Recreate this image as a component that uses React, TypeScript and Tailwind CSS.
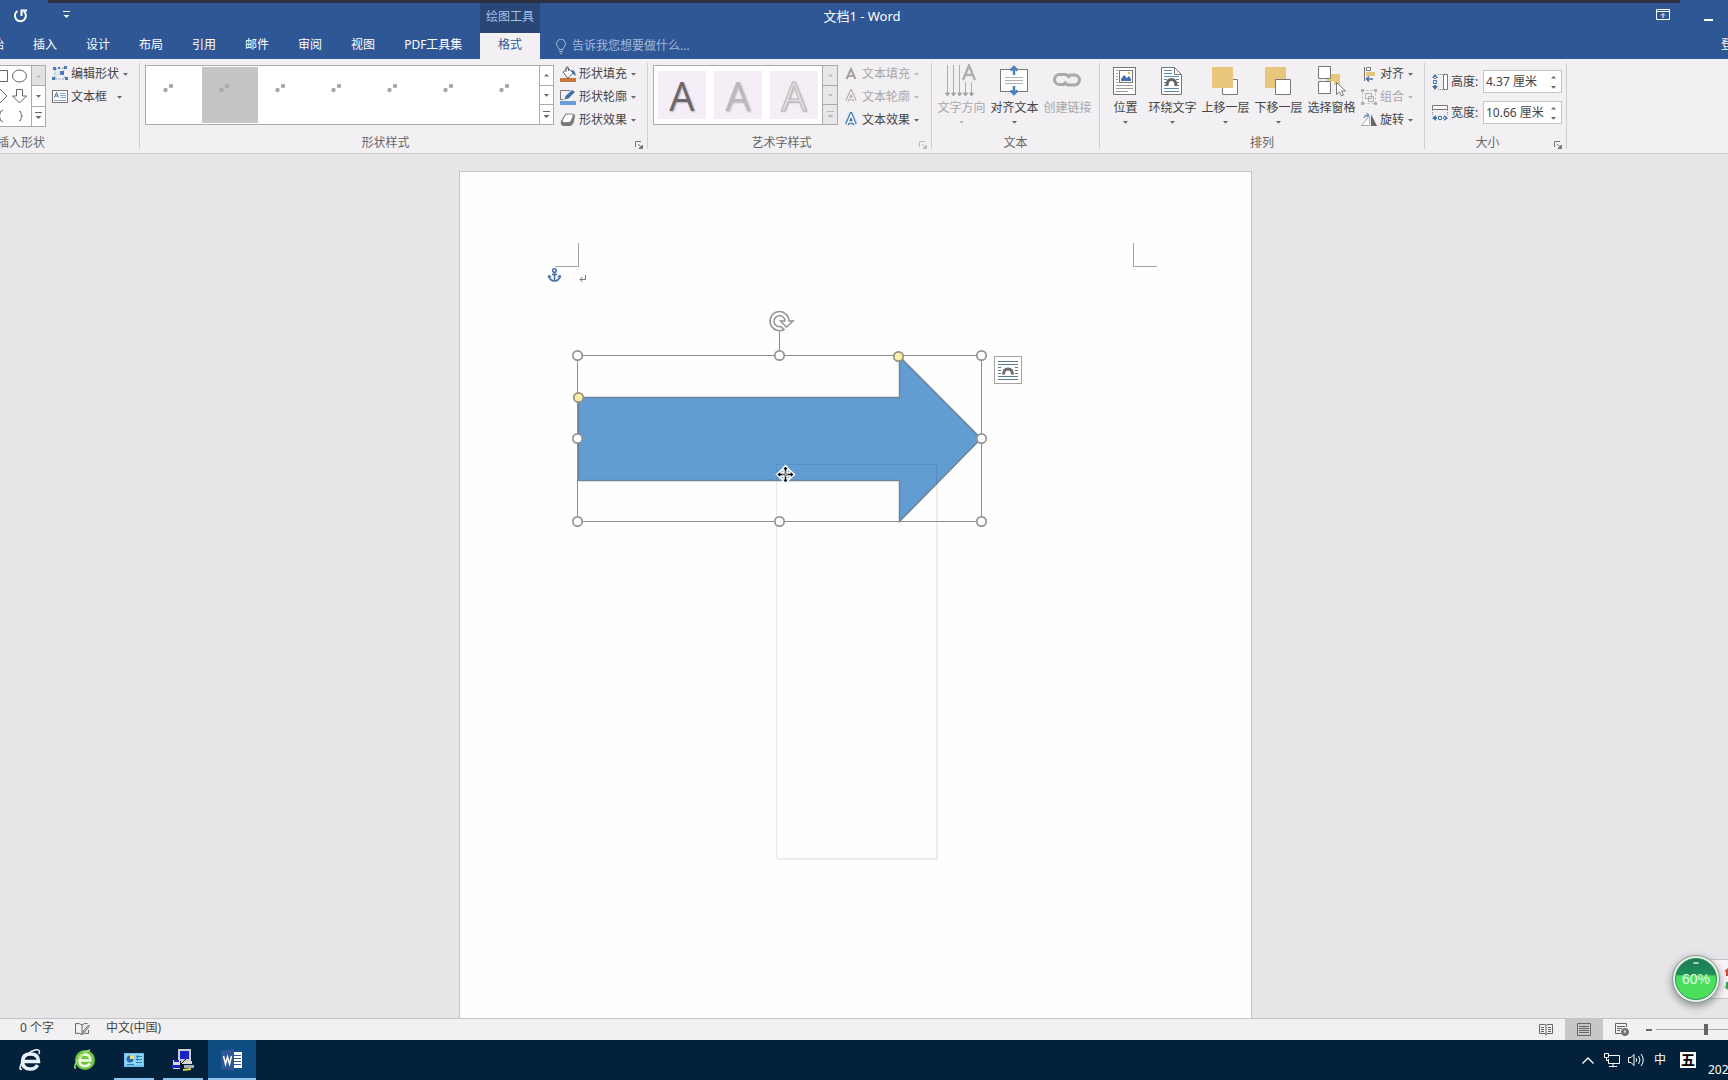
import React from 'react';
import clsx from 'clsx';

const tabs = ['开始', '插入', '设计', '布局', '引用', '邮件', '审阅', '视图', 'PDF工具集'];

/* ---------- small shared pieces ---------- */

const Caret: React.FC<{ up?: boolean; line?: boolean; className?: string }> = ({ up, line, className }) => (
  <svg width="7" height="8" viewBox="0 0 7 8" className={clsx('flex-none', className)} fill="currentColor">
    {line && <path d="M0 0h7v1H0z" />}
    <path d={up ? 'M1 5.5h5L3.5 3z' : line ? 'M0.5 4h6L3.5 7z' : 'M1 3h5L3.5 5.8z'} />
  </svg>
);

const ScrollColumn: React.FC<{ disabled?: boolean; atTop?: boolean; className?: string }> = ({ disabled, atTop, className }) => (
  <div className={clsx('flex flex-none flex-col border-l border-[#ababab]', disabled ? 'bg-[#e9e7ea] text-[#b8b6b9]' : 'bg-white text-[#666]', className)}>
    <button aria-label="向上" className={clsx('flex flex-1 items-center justify-center', atTop && 'bg-[#e3e1e4] text-[#b8b6b9]')}>
      <Caret up />
    </button>
    <button aria-label="向下" className="flex flex-1 items-center justify-center border-y border-[#ababab]">
      <Caret />
    </button>
    <button aria-label="其他" className="flex flex-1 items-center justify-center">
      <Caret line />
    </button>
  </div>
);

const Group: React.FC<{
  label: string;
  launcher?: 'on' | 'off';
  className?: string;
  bodyClass?: string;
  children: React.ReactNode;
}> = ({ label, launcher, className, bodyClass, children }) => (
  <section className={clsx('relative flex flex-none flex-col', className)}>
    <div className={clsx('flex h-[74px]', bodyClass)}>{children}</div>
    <div className={clsx('h-5 text-center leading-5 text-[#666]', launcher && 'pr-4')}>{label}</div>
    {launcher && (
      <button aria-label={label + '选项'} className={clsx('absolute right-1 bottom-1', launcher === 'on' ? 'text-[#777]' : 'text-[#bbb]')}>
        <svg width="8" height="8" viewBox="0 0 8 8" fill="none" stroke="currentColor">
          <path d="M0.5 6V0.5H6M3 3l3 3" />
          <path d="M7.5 4v3.5H4z" fill="currentColor" />
        </svg>
      </button>
    )}
  </section>
);

const Separator = () => <div className="my-1 w-px flex-none bg-[#d0ced1]" />;

const SmallButton: React.FC<{ icon: React.ReactNode; label: string; disabled?: boolean; wide?: boolean }> = ({ icon, label, disabled, wide }) => (
  <button disabled={disabled} className={clsx('flex h-[23px] items-center gap-[3px] whitespace-nowrap', disabled ? 'text-[#a8a6a9]' : 'text-[#444]')}>
    <svg width="16" height="16" viewBox="0 0 16 16" fill="none" className="flex-none">
      {icon}
    </svg>
    <span className={clsx(wide && 'w-[42px] text-left')}>{label}</span>
    <Caret className={disabled ? 'text-[#bbb]' : 'text-[#666]'} />
  </button>
);

const LargeButton: React.FC<{ icon: React.ReactNode; label: string; disabled?: boolean; noCaret?: boolean; className?: string }> = ({
  icon,
  label,
  disabled,
  noCaret,
  className,
}) => (
  <button disabled={disabled} className={clsx('flex flex-none flex-col items-center whitespace-nowrap pt-[5px]', disabled ? 'text-[#a8a6a9]' : 'text-[#444]', className ?? 'w-[53px]')}>
    <svg width="33" height="34" viewBox="0 0 33 34" fill="none">
      {icon}
    </svg>
    <span className="leading-5">{label}</span>
    {!noCaret && <Caret className={disabled ? 'text-[#bbb]' : 'text-[#666]'} />}
  </button>
);

/* ---------- ribbon icons ---------- */

const editShapeIcon = (
  <>
    <path d="M3 3l9-1M3 13h10M3 3v10M13 12l-3-5 4-5" stroke="#7d9cbd" strokeDasharray="2 1.5" />
    <path d="M4 12l5-5-4-3z" fill="#d6e6f4" />
    <path d="M1 1h3v3H1zM12 0h3v3h-3zM8 5h4v4H8zM0 11h3v3H0zM13 11h3v3h-3zM6 1h2v2H6z" fill="#4c7cb0" />
  </>
);

const textBoxIcon = (
  <>
    <rect x="0.5" y="1.5" width="15" height="12" fill="#fff" stroke="#777" />
    <path d="M2.5 8.5l2-5 2 5M3.2 7h2.6" stroke="#3f74ad" />
    <path d="M8 4.500h6M8 6.500h6M8 8.500h6M2 11.500h12" stroke="#8fa7bd" />
  </>
);

const fillIcon = (
  <>
    <path d="M3 6l5-4 5 5-4 4.500H7z" fill="#fff" stroke="#666" />
    <path d="M6 6V1.500Q7.500-.5 8.500 2v3" stroke="#666" />
    <path d="M11 4q5 0 4.500 6Q13 9 11 4z" fill="#4472a8" />
    <path d="M0 12h16v4H0z" fill="#c8763f" />
  </>
);

const outlineIcon = (
  <>
    <path d="M10 1.500H0.500v9h3" stroke="#777" />
    <path d="M4.500 10.500l1-3.500L12 1l3 2-6.500 6.500z" fill="#4472a8" />
    <path d="M0 12h16v4H0z" fill="#6a9bd8" />
  </>
);

const effectIcon = (
  <>
    <path d="M1 9l4-6.500Q6 1.500 8 2h5q2.500 0 2 2l-1 5q-1 5-5 5H3q-3-1-2-5z" fill="#777" />
    <path d="M5 3.500q1-1.500 3-1.500h4q2 0 1 2.500L11 9q-1 1.500-3 1.500H4Q1.500 10 2.500 8z" fill="#fff" stroke="#888" />
  </>
);

const textFillIcon = <path d="M3.500 13L8 3l4.500 10M5 10h6" stroke="#a3a1a4" strokeWidth="2" />;

const textOutlineIcon = (
  <>
    <path d="M4 12L8 3l4 9M5.500 9.500h5" stroke="#aaa8ab" strokeWidth="3.500" />
    <path d="M4 12L8 3l4 9M5.500 9.500h5" stroke="#f2f0f3" strokeWidth="1.500" />
  </>
);

const textEffectIcon = (
  <>
    <path d="M4 12.500L8 3l4 9.500M5.500 10h5" stroke="#b9d3ee" strokeWidth="5.500" />
    <path d="M4 12.500L8 3l4 9.500M5.500 10h5" stroke="#3b6da6" strokeWidth="3.500" />
    <path d="M4 12.500L8 3l4 9.500M5.500 10h5" stroke="#fff" strokeWidth="1.500" />
  </>
);

const textDirectionIcon = (
  <>
    <path d="M2.500 1v29M8.500 1v29M14.500 1v29M20.500 18v12M26.500 18v12" stroke="#b0aeb1" />
    <path d="M0.500 29h4l-2 3zM6.500 29h4l-2 3zM12.500 29h4l-2 3zM18.500 29h4l-2 3zM24.500 29h4l-2 3z" fill="#a3a1a4" stroke="#a3a1a4" />
    <path d="M18 16l6-14.500L30 16M20 11h8" stroke="#b0aeb1" strokeWidth="2.500" />
  </>
);

const alignTextIcon = (
  <>
    <rect x="2.500" y="5.500" width="27" height="22" fill="#fff" stroke="#777" />
    <path d="M7 13.500h18M7 16.500h18M7 19.500h18" stroke="#b0b0b0" />
    <path d="M16 11V4M12.500 6.500L16 3l3.500 3.500M16 22v7M12.500 26.500L16 30l3.500-3.500" stroke="#4a80ba" strokeWidth="2.500" />
  </>
);

const linkIcon = (
  <g stroke="#aaa8ab" strokeWidth="3">
    <path d="M14 20.500H8.500a5 5 0 0 1 0-10H14q3 0 4.500 3.500" />
    <path d="M18 11h5.500a5 5 0 0 1 0 10H18q-3 0-4.500-3.500" />
  </g>
);

const positionIcon = (
  <g transform="translate(-2 0)">
    <rect x="6.500" y="3.500" width="22" height="27" fill="#fff" stroke="#777" />
    <path d="M9 6.500h2M9 9.500h2M9 12.500h2M9 15.500h2M9 18.500h2M9 21.500h17M9 24.500h17M9 27.500h12" stroke="#9a9a9a" />
    <rect x="12.500" y="6.500" width="13" height="12" fill="#fff" stroke="#777" />
    <path d="M14 17v-2l3-4 3 3 2-2 2 3v2z" fill="#4472a8" />
    <path d="M21 8h2v2h-2z" fill="#e8b44e" />
  </g>
);

const wrapIcon = (
  <g transform="translate(-2 0)">
    <path d="M7.500 3.500h13l7 7v20h-20z" fill="#fff" stroke="#777" />
    <path d="M20.500 3.500v7h7" stroke="#777" />
    <path d="M10 6.500h8M10 9.500h8M10 12.500h15M10 15.500h3M10 18.500h2M10 21.500h2M22 15.500h3M23 18.500h2M23 21.500h2M10 24.500h15M10 27.500h15" stroke="#5f88ad" />
    <path d="M13 22q0-6.500 4.500-6.500T22 22" stroke="#666" strokeWidth="3" />
  </g>
);

const forwardIcon = (
  <>
    <path d="M13.500 15.500h15v15h-15z" fill="#fff" stroke="#777" />
    <path d="M3 3h21v21H3z" fill="#e8c67c" />
  </>
);

const backwardIcon = (
  <>
    <path d="M3 3h21v21H3z" fill="#e8c67c" />
    <path d="M13.500 15.500h15v15h-15z" fill="#fff" stroke="#777" />
  </>
);

const selectionPaneIcon = (
  <>
    <path d="M12 10h13v11h-6v-4h-7z" fill="#e8c67c" />
    <path d="M3.500 2.500h12v12h-12zM3.500 17.500h12v12h-12z" fill="#fff" stroke="#777" />
    <path d="M21.500 18.500v12l3-2.500 2 4 2-1-2-4h4z" fill="#fff" stroke="#777" />
  </>
);

const alignIcon = (
  <>
    <path d="M3.500 1v14" stroke="#777" />
    <path d="M5.500 1.500h4v3h-4z" fill="#fff" stroke="#777" />
    <path d="M5 6h9v4H5z" fill="#e8c67c" />
    <path d="M12 13H6M8 10.500L5.500 13 8 15.500" stroke="#4472a8" strokeWidth="1.500" />
  </>
);

const groupIcon = (
  <>
    <path d="M1.500 1.500h13v13h-13z" stroke="#bbb" strokeDasharray="2 2" />
    <path d="M4.500 4.500h6v5h-6zM7.500 7.500h5v5h-5z" stroke="#b0aeb1" />
    <path d="M0 0h3v3H0zM13 0h3v3h-3zM0 13h3v3H0zM13 13h3v3h-3z" fill="#b0aeb1" />
  </>
);

const rotateIcon = (
  <>
    <path d="M8.500 4v9.500h-8z" fill="#fff" stroke="#aaa" />
    <path d="M10 2v12h6z" fill="#666" />
    <path d="M3 6q0-3 4-3M5.500 1L8 3 5.500 5" stroke="#4472a8" />
  </>
);

const heightIcon = (
  <>
    <path d="M3 0L0 4h6zM3 16L0 12h6zM2 3h2v2H2zM2 11h2v2H2z" fill="#4472a8" />
    <path d="M1.500 6.500h3v3h-3z" stroke="#4472a8" />
    <path d="M6 0.500h5M6 15.500h5" stroke="#888" strokeDasharray="1 1" />
    <path d="M11.500 0.500h4v15h-4z" fill="#fff" stroke="#777" />
  </>
);

const widthIcon = (
  <>
    <path d="M0 13l4-3v6zM16 13l-4-3v6zM3 12h2v2H3zM11 12h2v2h-2z" fill="#4472a8" />
    <path d="M6.500 11.500h3v3h-3z" stroke="#4472a8" />
    <path d="M0.500 5v6M15.500 5v6" stroke="#888" strokeDasharray="1 1" />
    <path d="M0.500 0.500h15v4h-15z" fill="#fff" stroke="#777" />
  </>
);

const shapeCells = [
  <path d="M2.500 4.500h15v11h-15z" />,
  <ellipse cx="9.500" cy="10" rx="7" ry="6" />,
  <path d="M10 3l7 7-7 7-7-7z" />,
  <path d="M6.500 3.500h6V10h4L9.500 17 2.500 10h4z" />,
  <path d="M13 4.500q-3 0-3 3 0 2.500-1 2.500 1 0 1 2.500 0 3 3 3" />,
  <path d="M9 5q2 0 2 2.500t1.500 2.500q-1.500 0-1.500 2.500T9 15" />,
];

/* ---------- window sections ---------- */

const Header = () => (
  <header className="bg-[#2f5796] text-white">
    <div className="mx-12 h-[3px] bg-[#2c3040]" />
    <div className="flex h-[30px]">
      <div className="flex flex-1">
        <div className="flex w-[480px] items-start pt-1 pl-3">
          <button aria-label="重复" className="flex h-4 w-4 items-center justify-center">
            <svg width="15" height="15" viewBox="0 0 15 15" fill="none" stroke="#fff" strokeWidth="2">
              <path d="M4.500 3A5.500 5.500 0 1 0 11 3.500" />
              <path d="M8.500 8V2.500H14" />
            </svg>
          </button>
          <button aria-label="自定义快速访问工具栏" className="ml-[34px] flex h-4 w-2 items-center justify-center">
            <Caret line />
          </button>
        </div>
        <div className="w-[60px] bg-[#284676] text-center leading-7 text-[#a9bfe0]">绘图工具</div>
      </div>
      <h1 className="pr-1 text-[13px] leading-[26px]">文档1 - Word</h1>
      <div className="flex flex-1 items-start justify-end gap-[34px] pt-1.5">
        <button aria-label="功能区显示选项">
          <svg width="14" height="12" viewBox="0 0 14 12" fill="none" stroke="#fff">
            <path d="M0.500 .5h13v10H0.500zM0.500 2.500h13M7 9V5M5 6.500L7 4.500l2 2" />
          </svg>
        </button>
        <button aria-label="最小化" className="mr-[15px] flex h-4 w-[9px] items-center">
          <span className="mb-1 h-0.5 w-full self-end bg-white" />
        </button>
      </div>
    </div>
    <nav className="flex h-[26px] overflow-hidden whitespace-nowrap">
      <div className="flex w-[480px] flex-none gap-px overflow-hidden">
        {tabs.map((t, i) => (
          <button key={t} className={clsx('flex-none px-3.5 pb-0.5', i === 0 && '-ml-[34px]')}>
            {t}
          </button>
        ))}
      </div>
      <button className="w-[60px] flex-none bg-[#f2f0f3] pb-0.5 text-[#2f5796]">格式</button>
      <label className="ml-[15px] flex items-center gap-[5px] text-[#a3b9dc]">
        <svg width="12" height="15" viewBox="0 0 12 15" fill="none" stroke="currentColor">
          <path d="M4 10.500Q4 9 2.500 7.500a4.500 4.500 0 1 1 7 0Q8 9 8 10.500zM4 12.500h4M5 14.500h2" />
        </svg>
        <input placeholder="告诉我您想要做什么..." className="w-40 bg-transparent outline-none placeholder:text-[#a3b9dc]" />
      </label>
      <button className="-mr-[17px] ml-auto flex-none pb-0.5">登录</button>
    </nav>
  </header>
);

const SizeField: React.FC<{ id: string; label: string; value: string; icon: React.ReactNode }> = ({ id, label, value, icon }) => (
  <div className="flex h-[23px] items-center">
    <svg width="16" height="16" viewBox="0 0 16 16" fill="none" className="mr-[3px] flex-none">
      {icon}
    </svg>
    <label htmlFor={id} className="w-8 flex-none text-[#444]">
      {label}
    </label>
    <div className="flex h-full w-[79px] border border-[#c6c4c7] bg-white">
      <input id={id} defaultValue={value} className="w-[62px] flex-none pl-0.5 text-[#444] outline-none" />
      <div className="flex flex-1 flex-col justify-center text-[#666]">
        <button aria-label="增大" className="flex h-2.5 items-center justify-center">
          <Caret up />
        </button>
        <button aria-label="减小" className="flex h-2.5 items-center justify-center">
          <Caret />
        </button>
      </div>
    </div>
  </div>
);

const artStyles = [
  'text-[#6b686b]',
  'text-[#bdb8be]',
  'text-[#e2dde2] font-medium [-webkit-text-stroke:1px_#bcb7bb]',
];

const Ribbon = () => (
  <div className="flex h-[95px] overflow-hidden border-b border-[#d2d0d3] bg-[#f2f0f3]">
    <Group label="插入形状" className="-ml-[97px] w-[236px]" bodyClass="justify-end pr-2.5">
      <div className="mt-1.5 mr-1.5 flex h-[62px] flex-none border border-[#ababab] bg-white">
        <div className="grid grid-cols-2 pr-px">
          {shapeCells.map((shape, i) => (
            <button key={i} aria-label="形状" className="h-5 w-5">
              <svg width="20" height="20" viewBox="0 0 20 20" fill="none" stroke="#666">
                {shape}
              </svg>
            </button>
          ))}
        </div>
        <ScrollColumn atTop className="w-[14px]" />
      </div>
      <div className="w-[77px] pt-[3px]">
        <SmallButton icon={editShapeIcon} label="编辑形状" />
        <SmallButton icon={textBoxIcon} label="文本框" wide />
      </div>
    </Group>
    <Separator />
    <Group label="形状样式" launcher="on" className="w-[507px]" bodyClass="pl-[5px]">
      <div className="mt-1.5 mr-1.5 flex h-[60px] w-[409px] flex-none border border-[#ababab] bg-white">
        <div className="flex flex-1 py-px">
          {Array.from({ length: 7 }, (_, i) => (
            <button key={i} aria-label={'样式' + (i + 1)} className={clsx('w-14 pt-4', i === 1 && 'bg-[#c6c4c7]')}>
              <svg width="56" height="40" viewBox="0 0 56 40" fill={i === 1 ? '#aaa8ab' : '#a8a8a8'}>
                <circle cx="19.500" cy="7" r="2.200" />
                <circle cx="25" cy="3" r="2.200" />
              </svg>
            </button>
          ))}
        </div>
        <ScrollColumn className="w-[14px]" />
      </div>
      <div className="pt-[3px]">
        <SmallButton icon={fillIcon} label="形状填充" />
        <SmallButton icon={outlineIcon} label="形状轮廓" />
        <SmallButton icon={effectIcon} label="形状效果" />
      </div>
    </Group>
    <Separator />
    <Group label="艺术字样式" launcher="off" className="w-[283px]" bodyClass="pl-[5px]">
      <div className="mt-1.5 mr-[5px] flex h-[60px] w-[185px] flex-none border border-[#ababab] bg-white">
        <div className="flex flex-1 items-center gap-2 pl-1">
          {artStyles.map(style => (
            <button
              key={style}
              className={clsx("h-12 w-12 bg-[#f5eef7] text-center font-['Open_Sans','Noto_Sans',sans-serif] text-[40px] leading-[50px] [text-shadow:1px_1px_2px_#bbb5bb]", style)}
            >
              A
            </button>
          ))}
        </div>
        <ScrollColumn disabled className="w-[15px]" />
      </div>
      <div className="pt-[3px]">
        <SmallButton icon={textFillIcon} label="文本填充" disabled />
        <SmallButton icon={textOutlineIcon} label="文本轮廓" disabled />
        <SmallButton icon={textEffectIcon} label="文本效果" />
      </div>
    </Group>
    <Separator />
    <Group label="文本" className="w-[167px]" bodyClass="pl-[3px]">
      <LargeButton icon={textDirectionIcon} label="文字方向" disabled />
      <LargeButton icon={alignTextIcon} label="对齐文本" />
      <LargeButton icon={linkIcon} label="创建链接" disabled noCaret />
    </Group>
    <Separator />
    <Group label="排列" className="w-[324px]" bodyClass="pl-[5px]">
      <LargeButton icon={positionIcon} label="位置" className="w-[41px]" />
      <LargeButton icon={wrapIcon} label="环绕文字" />
      <LargeButton icon={forwardIcon} label="上移一层" />
      <LargeButton icon={backwardIcon} label="下移一层" />
      <LargeButton icon={selectionPaneIcon} label="选择窗格" noCaret />
      <div className="pt-[3px] pl-[3px]">
        <SmallButton icon={alignIcon} label="对齐" />
        <SmallButton icon={groupIcon} label="组合" disabled />
        <SmallButton icon={rotateIcon} label="旋转" />
      </div>
    </Group>
    <Separator />
    <Group label="大小" launcher="on" className="w-[141px]" bodyClass="flex-col gap-2 pt-[11px] pl-[7px]">
      <SizeField id="shape-height" label="高度:" value="4.37 厘米" icon={heightIcon} />
      <SizeField id="shape-width" label="宽度:" value="10.66 厘米" icon={widthIcon} />
    </Group>
    <Separator />
  </div>
);

const handles = [
  [117.5, 183.5],
  [319.5, 183.5],
  [521.5, 183.5],
  [117.5, 266.5],
  [521.5, 266.5],
  [117.5, 349.5],
  [319.5, 349.5],
  [521.5, 349.5],
];

const Drawing = () => (
  <svg width="791" height="846" viewBox="0 0 791 846" fill="none" className="absolute top-0 left-0">
    {/* margin corners */}
    <path d="M95 94.500h23.500V71M673.500 71v23.500H697" stroke="#a0a0a0" />
    {/* anchor and paragraph mark */}
    <g stroke="#4273a8" strokeWidth="1.500">
      <circle cx="94.500" cy="98.500" r="1.800" />
      <path d="M94.500 100.500V109M92 102.500h5M89 104q1 5 5.500 5t5.500-5" />
      <path d="M88 106l1-3 2.500 2M101 106l-1-3-2.500 2" strokeWidth="1" />
    </g>
    <path d="M125.500 103v4.500H120M122.500 105l-2.500 2.500 2.500 2.500" stroke="#777" />

    <path d="M118.500 225.500h321v-41L521 266.500l-81.500 83v-41h-321z" fill="#619cd3" stroke="#6d8496" strokeWidth="1.500" />

    {/* outline left behind by the dragged shape */}
    <path d="M316.500 292.500h160v394h-160z" stroke="#000" strokeOpacity="0.08" />
    <path d="M317 687.500h160.500V293" stroke="#000" strokeOpacity="0.05" />

    <path d="M117.500 183.500h404v166h-404zM319.500 160v23" stroke="#8c8c8c" />
    {handles.map(([cx, cy]) => (
      <circle key={cx + '-' + cy} cx={cx} cy={cy} r="4.700" fill="#fff" stroke="#939393" strokeWidth="1.700" />
    ))}
    <circle cx="118.500" cy="225.500" r="4.700" fill="#fdeea6" stroke="#939380" strokeWidth="1.700" />
    <circle cx="438.500" cy="184.500" r="4.700" fill="#fdeea6" stroke="#939380" strokeWidth="1.700" />

    {/* rotation handle */}
    <path
      d="M324 157.500A9.500 9.500 0 1 1 329 149h4l-6.500 6-6-6h4.500a5.500 5.500 0 1 0-4 5.500z"
      fill="#fff"
      stroke="#939393"
      strokeWidth="1.500"
    />

    {/* move pointer */}
    <g transform="translate(325.500 302.500)">
      <path
        d="M0-9l4 4.500H1.500v3h3V-4L9 0 4.500 4V1.500h-3v3H4L0 9l-4-4.500h2.500v-3h-3V4L-9 0l4.500-4v2.500h3v-3H-4z"
        fill="#000"
        stroke="#fff"
        strokeWidth="1.500"
      />
      <path d="M-3 0h6M0-3v6" stroke="#fff" strokeDasharray="1 1" />
    </g>
  </svg>
);

const Workspace = () => (
  <main className="relative flex flex-1 justify-center overflow-hidden bg-[#e6e6e9] pt-[17px] pr-[17px]">
    <div className="relative w-[793px] flex-none border border-b-0 border-[#c3c3c5] bg-[#fefefe]">
      <Drawing />
      <button aria-label="布局选项" className="absolute top-[184px] left-[534px] h-7 w-7 border border-[#a5a5a5] bg-white">
        <svg width="26" height="26" viewBox="0 0 26 26" fill="none">
          <path d="M3 4.500h20M3 7.500h20M3 10.500h3M3 13.500h3M3 16.500h3M20 10.500h3M20 13.500h3M20 16.500h3M3 19.500h20M3 22.500h20" stroke="#5b7d90" />
          <path d="M8.500 17.500Q8.500 12 13 12t4.500 5.500" stroke="#716c70" strokeWidth="3" />
        </svg>
      </button>
    </div>

    <div className="absolute right-0 bottom-[15px] flex h-12 w-14 items-center">
      <div className="absolute top-1 right-0 flex h-10 w-7 flex-col items-end justify-center gap-1.5 border-y border-[#c4c4c8] bg-[#f7f3f6]">
        <svg width="4" height="8" viewBox="0 0 4 8">
          <path d="M0 3.500L4 0v8H2V3.500z" fill="#cf4a42" />
        </svg>
        <svg width="4" height="8" viewBox="0 0 4 8">
          <path d="M0 4.500L4 8V0H2v4.500z" fill="#37a35c" />
        </svg>
      </div>
      <div className="relative flex h-12 w-12 items-center justify-center rounded-full border border-[#8a9990] bg-[#e3f3e6] p-0.5 shadow-[0_3px_8px_rgba(0,0,0,0.4)]">
        <div className="flex h-full w-full items-center justify-center rounded-full border border-[#2b8a55] bg-linear-to-b from-[#1c7a55] from-0% via-[#1f9059] via-40% to-[#4be05c] to-42% font-['Liberation_Sans',sans-serif] text-[14px] text-[#e6fbe8]">
          60%
        </div>
        <span className="absolute top-1.5 left-5 h-0.5 w-1.5 rounded-full bg-white/60" />
      </div>
    </div>
  </main>
);

const StatusBar = () => (
  <footer className="flex h-[22px] flex-none items-stretch overflow-hidden border-t border-[#c3c3c5] bg-[#f2f0f3] text-[#444]">
    <button className="ml-5 pb-[3px]">0 个字</button>
    <button aria-label="校对" className="ml-[21px]">
      <svg width="15" height="13" viewBox="0 0 15 13" fill="none" stroke="#666">
        <path d="M7 11.500Q5 9.500 0.500 10.500v-10Q5 0 7 2zM7 2Q9 0 12.500 0.500M7 11.500Q9 9.500 13.500 10.500V7" />
        <path d="M8.500 8l5-6 1 1-5 6-1.500.5z" />
      </svg>
    </button>
    <button className="ml-4 flex-none pb-[3px]">中文(中国)</button>
    <div className="-mr-7 ml-auto flex flex-none items-stretch">
      <button aria-label="阅读视图" className="flex w-[38px] items-center justify-center">
        <svg width="14" height="13" viewBox="0 0 14 13" fill="none" stroke="#666">
          <path d="M7 1.500v11M0.500 1.500H6l1 1 1-1h5.500v9H8l-1 1-1-1H.5zM2 4.500h3M2 6.500h3M2 8.500h3M9 4.500h3M9 6.500h3M9 8.500h3" />
        </svg>
      </button>
      <button aria-label="页面视图" className="flex w-[38px] items-center justify-center bg-[#c8c6c9]">
        <svg width="14" height="13" viewBox="0 0 14 13" fill="none" stroke="#666">
          <path d="M0.500 0.500h13v12H.5zM2 3.500h10M2 5.500h10M2 7.500h10M2 9.500h10" />
        </svg>
      </button>
      <button aria-label="Web 版式视图" className="flex w-[38px] items-center justify-center">
        <svg width="14" height="13" viewBox="0 0 14 13" fill="none" stroke="#666">
          <path d="M6 10.500H.5v-10h11V4M2 3.500h8M2 5.500h5M2 7.500h3" />
          <circle cx="10" cy="9" r="3.500" fill="#777" />
          <path d="M8.500 8l1.500-1 1 1.500-1 2z" fill="#ddd" stroke="none" />
        </svg>
      </button>
      <button aria-label="缩小" className="flex w-[15px] items-center justify-center">
        <span className="h-0.5 w-1.5 bg-[#666]" />
      </button>
      <input
        type="range"
        aria-label="显示比例"
        defaultValue={50}
        className="my-auto h-3 w-[100px] appearance-none bg-transparent [&::-webkit-slider-runnable-track]:h-px [&::-webkit-slider-runnable-track]:bg-[#aaa] [&::-webkit-slider-thumb]:-mt-[5px] [&::-webkit-slider-thumb]:h-[11px] [&::-webkit-slider-thumb]:w-1 [&::-webkit-slider-thumb]:appearance-none [&::-webkit-slider-thumb]:bg-[#666]"
      />
    </div>
  </footer>
);

const TaskItem: React.FC<{ label: string; open?: boolean; active?: boolean; wide?: boolean; children: React.ReactNode }> = ({
  label,
  open,
  active,
  wide,
  children,
}) => (
  <button aria-label={label} className={clsx('relative flex h-10 items-center justify-center', wide ? 'w-[60px]' : 'w-12', active && 'bg-[#0f4c81]')}>
    <svg width="24" height="24" viewBox="0 0 24 24" fill="none">
      {children}
    </svg>
    {open && <span className={clsx('absolute bottom-0 h-0.5 bg-[#8cc4ee]', active ? 'w-full' : 'w-10')} />}
  </button>
);

const Taskbar = () => (
  <div className="flex h-10 flex-none overflow-hidden bg-[#03213b] text-white">
    <div className="flex gap-px">
      <TaskItem label="Internet Explorer" wide>
        <path d="M5 13.500h15.500q0-7.500-8-7.500T4.500 13.500t8 7.500q5 0 7-4" stroke="#e8f2fb" strokeWidth="3.500" />
        <path d="M4 21q-4 2 0-7Q9 4 17 2q6-1 4 4" stroke="#e8f2fb" strokeWidth="1.500" />
      </TaskItem>
      <TaskItem label="360 安全浏览器">
        <circle cx="12" cy="12" r="10" fill="#6cc644" />
        <path d="M7 12.500h10.500q0-6-5.500-6t-5.500 6 5.500 5.500q3.500 0 5-2.500" stroke="#f4ffe9" strokeWidth="2.500" />
        <path d="M3 20q-3 1 1-7Q9 5 17 2" stroke="#a8e36f" strokeWidth="1.500" />
      </TaskItem>
      <TaskItem label="控制面板" open>
        <path d="M2 5h20v14H2z" fill="#6fc3ea" />
        <path d="M3 6h18v11H3z" fill="#8dd6f5" />
        <circle cx="8" cy="11" r="3.500" fill="#2b6db0" />
        <path d="M8 11V7a4 4 0 0 1 4 4z" fill="#f3df6a" />
        <path d="M14 8.500h6M14 11.500h6M15.500 7v6M5 16.500h7M14 14.500h6" stroke="#2a7fb5" />
      </TaskItem>
      <TaskItem label="PuTTY" open>
        <path d="M7 1h13v12H7z" fill="#c9cbd6" />
        <path d="M9 3h9v8H9z" fill="#1b22c4" />
        <path d="M10 13h11v3H10zM2 12h7v9H2z" fill="#d7d8de" />
        <path d="M1 17h8v3H1zM3 12h5v2H3z" fill="#1b22c4" />
        <path d="M13 17h10v3H13z" fill="#a9aab5" />
        <path d="M12 22l8-1" stroke="#d9d54a" strokeWidth="2" />
        <path d="M15 11l-6 6h4l-5 5" stroke="#111" />
      </TaskItem>
      <TaskItem label="Word" open active>
        <path d="M13 4h9v16h-9z" fill="#fff" />
        <path d="M13 7.500h8M13 10.500h8M13 13.500h8M13 16.500h8" stroke="#2f5796" />
        <path d="M1 3l13-2v22L1 21z" fill="#2f5796" />
        <path d="M3.500 8l2 8 2-7 2 7 2-8" stroke="#fff" strokeWidth="1.500" />
      </TaskItem>
    </div>
    <div className="ml-auto flex flex-none items-center">
      <button aria-label="显示隐藏的图标" className="mr-2.5">
        <svg width="12" height="7" viewBox="0 0 12 7" fill="none" stroke="#fff" strokeWidth="1.300">
          <path d="M0.500 6.500L6 1l5.500 5.500" />
        </svg>
      </button>
      <button aria-label="网络" className="mr-2">
        <svg width="16" height="14" viewBox="0 0 16 14" fill="none" stroke="#fff">
          <path d="M5 2.500h10.500v8H4.500V6M9 10.500V13M5 13.500h8M0.500 .5h4v4h-4zM2.500 4.500v3h2" />
        </svg>
      </button>
      <button aria-label="音量" className="mr-2.5">
        <svg width="16" height="14" viewBox="0 0 16 14" fill="none" stroke="#fff">
          <path d="M0.500 4.500H3l3-3v11l-3-3H.5zM8 5q1.500 2 0 4M10.500 3q3 4 0 8M13 1q4.500 6 0 12" />
        </svg>
      </button>
      <button className="mr-3.5">中</button>
      <button className="mr-3 h-4 w-4 bg-white text-center text-[14px] leading-4 font-bold text-black">五</button>
      <time className="mt-5 w-5 overflow-hidden">202</time>
    </div>
  </div>
);

export default function App() {
  return (
    <div className="flex h-screen flex-col overflow-hidden font-['Noto_Sans','Noto_Sans_CJK_SC',sans-serif] text-xs">
      <Header />
      <Ribbon />
      <Workspace />
      <StatusBar />
      <Taskbar />
    </div>
  );
}
